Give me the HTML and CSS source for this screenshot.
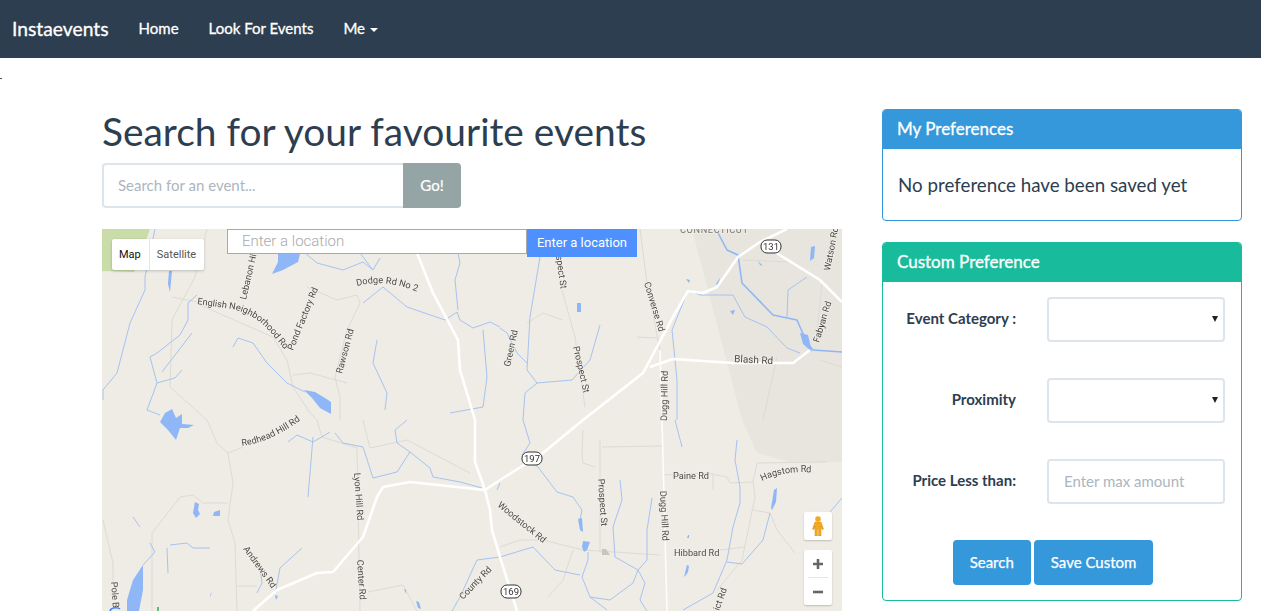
FILE: index.html
```html
<!DOCTYPE html>
<html lang="en">
<head>
    <meta charset="UTF-8">
    <title>Instaevents</title>
    <link rel="stylesheet" href="styles.css">
</head>
<body>
    <nav class="navbar">
        <a class="brand" href="#">Instaevents</a>
        <a class="nav-link" href="#">Home</a>
        <a class="nav-link" href="#">Look For Events</a>
        <a class="nav-link" href="#">Me <span class="caret"></span></a>
    </nav>
    <span class="stray"></span>

    <div class="page">
        <main class="search-col">
            <h1>Search for your favourite events</h1>
            <div class="input-group">
                <input class="search-input" type="text" placeholder="Search for an event...">
                <button class="go-btn">Go!</button>
            </div>

            <div class="map">
                <svg class="map-art" viewBox="102 229 740 382" width="740" height="382">
                    <defs>
                        <path id="english-rd" d="M197,304 L232,309 C250,313 262,322 272,334 L290,356"/>
                        <path id="dodge-rd" d="M357,286 C375,281 395,282 420,293"/>
                        <path id="hagstom-rd" d="M762,481 C778,473 795,471 820,473"/>
                        <path id="redhead-rd" d="M242,446 C262,443 280,436 306,416"/>
                    </defs>

                    <!-- land -->
                    <polygon class="shade" points="692,229 742,420 757,453 790,462 842,462 842,229"/>
                    <polygon class="park" points="102,229 150,229 139,262 134,272 102,271"/>

                    <!-- minor roads -->
                    <g class="minor">
                        <path d="M207,229 L195,277 L172,320 L170,387 L207,420 L217,443 L228,453 L233,483 L228,520 L235,543 L237,611"/>
                        <path d="M172,297 L197,302 M200,305 L273,337 L287,360 L293,387 L310,413 L317,420 L322,437 L357,448 L360,611"/>
                        <path d="M307,287 L337,300 L357,295 L360,303 L347,330 L335,377 L340,397 L340,420"/>
                        <path d="M293,375 L310,373 L347,383"/>
                        <path d="M228,453 L243,447"/>
                        <path d="M180,497 L152,533 L152,611 M180,497 L193,495 L203,503 L228,503"/>
                        <path d="M363,420 L370,448 L407,440 L470,473"/>
                        <path d="M368,592 L403,585 L417,611"/>
                        <path d="M103,520 L113,563 L113,583"/>
                        <path d="M237,586 L257,586"/>
                        <path d="M583,430 L582,453 L583,463 L595,467 M600,440 L600,553 M602,447 L662,446"/>
                        <path d="M500,547 L520,540 L543,540 L583,550 L660,555"/>
                        <path d="M573,550 L563,580 L548,597"/>
                        <path d="M663,475 L707,473 L727,477 L730,483 L753,482 L757,463 L827,462"/>
                        <path d="M755,497 L742,560 L717,590 M753,482 L755,497"/>
                        <path d="M753,510 L770,513 L777,530 L795,553"/>
                        <path d="M713,475 L713,490"/>
                        <path d="M720,550 L745,547"/>
                        <path d="M640,229 L647,283 L660,350 M637,337 L657,338"/>
                        <path d="M560,283 L575,337 L585,407"/>
                        <path d="M527,323 L543,313 L563,320"/>
                        <path d="M777,357 L763,420 M820,360 L842,367"/>
                        <path d="M822,283 L817,333"/>
                        <path d="M743,260 L790,262"/>
                        <path d="M500,250 L520,240"/>
                    </g>

                    <!-- rivers -->
                    <g class="river">
                        <path d="M155,229 L145,277 L145,290 L130,323 L117,373 L103,390 L103,400"/>
                        <path d="M197,295 L188,303 L188,320 L180,335 L157,353 L150,357 L157,383 L147,410 L160,415"/>
                        <path d="M182,370 L175,378 L157,383"/>
                        <path d="M192,333 L162,372"/>
                        <path d="M233,347 L238,338 L253,343 L267,363 L287,383 L305,392"/>
                        <path d="M305,253 L317,263 L343,270 L363,262 L373,270 L380,258 M360,253 L373,270"/>
                        <path d="M363,303 L383,287 L407,307 L445,320 L457,312 L460,320 L473,328 L490,322 L500,327"/>
                        <path d="M458,253 L460,263 L455,280 L458,310"/>
                        <path d="M483,330 L487,377 L483,407 L450,413"/>
                        <path d="M377,340 L373,363 L387,393 L385,410"/>
                        <path d="M288,442 L297,435 L313,442 L330,432 M313,437 L308,497"/>
                        <path d="M335,433 L343,443 L363,447 L373,478 L397,472 L410,452 L397,443 L395,430 L407,420"/>
                        <path d="M410,452 L430,468 L433,477 L460,482 L482,488"/>
                        <path d="M500,483 L497,490"/>
                        <path d="M133,517 L140,527"/>
                        <path d="M150,543 L155,552 L143,565"/>
                        <path d="M170,545 L187,543 L193,548 L210,548"/>
                        <path d="M167,548 L168,573"/>
                        <path d="M302,548 L280,568 L276,590"/>
                        <path d="M260,567 L262,583 L257,593"/>
                        <path d="M500,557 L477,560 L460,597 L452,611"/>
                        <path d="M523,420 L530,443 L522,455 L538,467 L557,492 L573,497 L582,510 L580,520"/>
                        <path d="M588,552 L588,560 L582,577 L590,597 L607,610"/>
                        <path d="M500,557 L533,547 L555,570 L580,575"/>
                        <path d="M620,480 L622,500 L613,527 L615,557 L638,570 L645,583 L640,600 L647,611"/>
                        <path d="M652,498 L647,530 L647,560 L638,570 L633,583 L610,600 L590,597"/>
                        <path d="M737,440 L735,460 L740,487 L740,503 L733,527 L727,560 L713,593 L683,610"/>
                        <path d="M727,562 L742,564 L763,540 L770,513"/>
                        <path d="M675,420 L682,447"/>
                        <path d="M842,498 L830,512"/>
                        <path d="M540,257 L530,317 L527,370 L537,383 L572,380 L590,360 L600,325"/>
                        <path d="M500,328 L507,333 L517,353 L527,363"/>
                        <path d="M537,383 L525,393 L523,420"/>
                        <path d="M690,290 L700,295 L733,295 L745,317 L767,327 L787,348 L800,353"/>
                        <path d="M687,293 L672,330 L677,380 L677,420"/>
                        <path d="M787,317 L788,290 L807,277"/>
                        <path class="river-wide" d="M718,233 L727,250 L738,255 L742,283 L773,315 L797,320 L807,343 L813,350"/>
                        <path class="river-wide" d="M813,350 L842,352"/>
                    </g>

                    <!-- water -->
                    <g class="water">
                        <path d="M278,253 L292,253 L301,250 L298,262 L283,270 L272,274 L278,262Z"/>
                        <path d="M304,390 L315,392 L325,398 L331,402 L331,414 L320,408 L312,398Z"/>
                        <path d="M165,413 L172,409 L176,418 L182,414 L182,424 L194,425 L188,428 L180,428 L176,440 L168,430 L160,422Z"/>
                        <path d="M169,271 L172,271 L170,292 L168,284Z"/>
                        <path d="M143,565 L133,580 L127,600 L127,611 L139,611 L143,590Z"/>
                        <path d="M195,502 L199,504 L198,510 L200,514 L196,518 L193,513Z"/>
                        <path d="M214,512 L220,510 L220,516 L213,516Z"/>
                        <path d="M577,303 L581,303 L581,312 L577,312Z"/>
                        <path d="M730,311 L735,310 L733,315Z"/>
                        <path d="M686,279 L690,280 L689,283Z"/>
                        <path d="M716,284 L720,278 L718,286Z"/>
                        <path d="M811,247 L815,246 L814,258 L810,261Z"/>
                        <path d="M800,333 L808,335 L812,352 L803,344Z"/>
                        <path d="M758,261 L763,266 L760,265Z"/>
                        <path d="M771,508 L774,490 L777,488 L776,502 L772,510Z"/>
                        <path d="M578,519 L582,518 L583,532 L580,530Z"/>
                        <path d="M583,541 L590,542 L587,550 L584,552 L582,547Z"/>
                        <path d="M687,565 L689,566 L688,572 L686,575 L684,577Z"/>
                        <path d="M688,535 L689,535 L689,538 L687,538Z"/>
                        <path d="M210,595 L212,592 L210,597Z"/>
                        <path d="M275,595 L278,596 L276,600Z"/>
                        <path d="M416,601 L419,602 L421,609 L418,608Z"/>
                        <path d="M404,589 L406,590 L406,594Z"/>
                    </g>

                    <!-- main roads -->
                    <g class="road">
                        <path d="M417,253 L433,293 L458,340 L460,370 L475,420 L475,462 L485,490 L490,510 L492,530 L500,557 L517,611"/>
                        <path d="M787,229 L760,242 L738,257 L717,287 L703,293 L688,291 L673,317 L643,373 L583,420 L543,453 L500,480 L485,490"/>
                        <path d="M770,249 L820,280 L842,302"/>
                        <path d="M650,367 L673,359 L733,363 L793,363 L810,350"/>
                        <path d="M485,490 L410,482 L383,487 L377,497 L363,537 L333,572 L317,573 L277,590 L253,611"/>
                        <path class="road-thin" d="M660,350 L662,420 L667,611"/>
                    </g>

                    <!-- road names -->
                    <g class="labels">
                        <text transform="translate(246,300) rotate(-77)">Lebanon Hill</text>
                        <text><textPath href="#english-rd">English Neighborhood Rd</textPath></text>
                        <text transform="translate(293,351) rotate(-68)">Pond Factory Rd</text>
                        <text transform="translate(342,374) rotate(-75)">Rawson Rd</text>
                        <text><textPath href="#dodge-rd">Dodge Rd No 2</textPath></text>
                        <text transform="translate(510,367) rotate(-78)">Green Rd</text>
                        <text transform="translate(556,256) rotate(82)">spect St</text>
                        <text transform="translate(573,347) rotate(77)">Prospect St</text>
                        <text transform="translate(644,283) rotate(73)">Converse Rd</text>
                        <text class="label-big" transform="translate(734,362) rotate(3)">Blash Rd</text>
                        <text transform="translate(667,421) rotate(-89)">Dugg Hill Rd</text>
                        <text transform="translate(819,343) rotate(-73)">Fabyan Rd</text>
                        <text transform="translate(830,271) rotate(-79)">Watson Rd</text>
                        <text class="label-caps" x="680" y="233">CONNECTICUT</text>
                        <text><textPath href="#redhead-rd">Redhead Hill Rd</textPath></text>
                        <text transform="translate(354,473) rotate(86)">Lyon Hill Rd</text>
                        <text transform="translate(357,560) rotate(86)">Center Rd</text>
                        <text transform="translate(243,549) rotate(54)">Andrews Rd</text>
                        <text transform="translate(463,600) rotate(-46)">County Rd</text>
                        <text transform="translate(497,506) rotate(39)">Woodstock Rd</text>
                        <text transform="translate(598,479) rotate(86)">Prospect St</text>
                        <text x="673" y="479">Paine Rd</text>
                        <text><textPath href="#hagstom-rd">Hagstom Rd</textPath></text>
                        <text transform="translate(660,491) rotate(87)">Dugg Hill Rd</text>
                        <text x="674" y="556">Hibbard Rd</text>
                        <text transform="translate(719,611) rotate(-70)">ict Rd</text>
                        <text transform="translate(111,582) rotate(86)">Pole B</text>
                    </g>

                    <polygon class="building" points="602,549 606,549 610,555 602,555"/>

                    <!-- shields -->
                    <g class="shield">
                        <rect x="761" y="240" width="20" height="13" rx="6"/>
                        <text x="771" y="250">131</text>
                        <rect x="522" y="452" width="20" height="13" rx="6"/>
                        <text x="532" y="462">197</text>
                        <rect x="501" y="585" width="20" height="13" rx="6"/>
                        <text x="511" y="595">169</text>
                    </g>

                    <!-- bits of the logo at the bottom -->
                    <path class="logo-blue" d="M110,611 C111,607 118,607 120,609"/>
                    <path class="logo-green" d="M158,607 L158,611"/>
                </svg>

                <div class="map-type">
                    <span class="map-type-on">Map</span>
                    <span class="map-type-off">Satellite</span>
                </div>
                <div class="location">
                    <input class="location-input" type="text" placeholder="Enter a location">
                    <button class="location-btn">Enter a location</button>
                </div>
                <div class="pegman">
                    <svg viewBox="0 0 12 20" width="12" height="20">
                        <circle cx="6" cy="3" r="2.8" fill="#f2a91e"/>
                        <path d="M3 6 H9 L11.5 13 L10 13.5 L9 10 V20 H6.6 V13 H5.4 V20 H3 V10 L2 13.5 L0.5 13Z" fill="#f2a91e" stroke="#d98c12" stroke-width="0.5"/>
                    </svg>
                </div>
                <div class="zoom">
                    <button class="zoom-btn">
                        <svg viewBox="0 0 12 12" width="12" height="12"><path d="M4.7 1 H7.3 V4.7 H11 V7.3 H7.3 V11 H4.7 V7.3 H1 V4.7 H4.7Z" fill="#666"/></svg>
                    </button>
                    <span class="zoom-sep"></span>
                    <button class="zoom-btn">
                        <svg viewBox="0 0 12 12" width="12" height="12"><rect x="1" y="4.7" width="10" height="2.6" fill="#666"/></svg>
                    </button>
                </div>
            </div>
        </main>

        <aside class="side-col">
            <section class="panel panel-blue">
                <h3 class="panel-title">My Preferences</h3>
                <div class="panel-body">
                    <p class="empty-note">No preference have been saved yet</p>
                </div>
            </section>

            <section class="panel panel-green">
                <h3 class="panel-title">Custom Preference</h3>
                <form class="pref-form">
                    <div class="form-row">
                        <label>Event Category :</label>
                        <div class="select-wrap"><select class="field"></select></div>
                    </div>
                    <div class="form-row">
                        <label>Proximity</label>
                        <div class="select-wrap"><select class="field"></select></div>
                    </div>
                    <div class="form-row">
                        <label>Price Less than:</label>
                        <input class="field" type="text" placeholder="Enter max amount">
                    </div>
                    <div class="form-actions">
                        <button class="btn" type="button">Search</button>
                        <button class="btn" type="button">Save Custom</button>
                    </div>
                </form>
            </section>
        </aside>
    </div>
</body>
</html>
```

FILE: styles.css
```css
* {
    box-sizing: border-box;
}

html, body {
    margin: 0;
    height: 611px;
    overflow: hidden;
}

body {
    position: relative;
    font-family: Lato, "Liberation Sans", sans-serif;
    font-size: 15px;
    color: #2c3e50;
    background-color: #fff;
}

/* Top bar */
.navbar {
    display: flex;
    align-items: center;
    height: 58px;
    padding: 0 0 2px 12px;
    background-color: #2c3e50;
}

.navbar a {
    color: #fff;
    text-decoration: none;
    -webkit-text-stroke: 0.3px #fff;
}

.brand {
    font-size: 19.3px;
    margin-right: 30px;
}

.nav-link {
    font-size: 15px;
    margin-right: 30px;
}

.caret {
    display: inline-block;
    width: 0;
    height: 0;
    margin-left: 1px;
    vertical-align: middle;
    border-top: 4px solid #fff;
    border-left: 4px solid transparent;
    border-right: 4px solid transparent;
}

/* the stray dot under the bar */
.stray {
    position: absolute;
    top: 78px;
    left: 0;
    width: 2px;
    height: 1px;
    background-color: #555;
}

/* Columns */
.page {
    display: flex;
    gap: 40px;
    padding: 51px 19px 0 102px;
}

.search-col {
    width: 740px;
    flex: none;
}

.side-col {
    width: 360px;
    flex: none;
}

h1 {
    font-size: 38.9px;
    font-weight: 400;
    line-height: 43px;
    margin: 1px 0 10px;
}

.input-group {
    display: flex;
    width: 359px;
    height: 45px;
    margin-bottom: 21px;
}

.search-input {
    flex: 1;
    min-width: 0;
    padding: 0 14px 2px;
    font: inherit;
    color: #2c3e50;
    border: 2px solid #dce4ec;
    border-right: 0;
    border-radius: 4px 0 0 4px;
    outline: none;
}

.search-input::placeholder,
.field::placeholder {
    color: #acb6c0;
    opacity: 1;
}

.go-btn {
    width: 58px;
    padding: 0 0 2px;
    font: inherit;
    color: #fff;
    background-color: #95a5a6;
    border: 0;
    border-radius: 0 4px 4px 0;
    -webkit-text-stroke: 0.2px #fff;
}

/* Map */
.map {
    position: relative;
    width: 740px;
    height: 382px;
    overflow: hidden;
    background-color: #eeece5;
    font-family: Roboto, Arial, sans-serif;
}

.map-art {
    display: block;
    filter: blur(0.35px);
}

.shade { fill: #e8e5de; }
.park { fill: #c9dcaa; }
.building { fill: #c9c5bc; }

.minor path {
    fill: none;
    stroke: #dbd8d0;
    stroke-width: 0.9;
    stroke-linejoin: round;
}

.river path {
    fill: none;
    stroke: #9dbdf3;
    stroke-width: 0.9;
    stroke-linejoin: round;
}

.river .river-wide {
    stroke: #8fb6f7;
    stroke-width: 1.6;
}

.water path {
    fill: #8fb6f7;
}

.road path {
    fill: none;
    stroke: #fff;
    stroke-width: 2.6;
    stroke-linejoin: round;
}

.road .road-thin {
    stroke-width: 1.6;
    stroke: #fdfdfb;
}

.labels text {
    font-size: 9.2px;
    fill: #4a4a46;
    stroke: #f1efe9;
    stroke-width: 1.4;
    paint-order: stroke;
}

.labels .label-big {
    font-size: 10px;
}

.labels .label-caps {
    letter-spacing: 0.6px;
    fill: #77746c;
}

.shield rect {
    fill: #fff;
    stroke: #333;
    stroke-width: 1;
}

.shield text {
    font-size: 9.5px;
    fill: #333;
    text-anchor: middle;
}

.logo-blue {
    fill: none;
    stroke: #4285f4;
    stroke-width: 1.5;
}

.logo-green {
    stroke: #34a853;
    stroke-width: 1.5;
}

.map-type {
    position: absolute;
    top: 10px;
    left: 10px;
    display: flex;
    height: 31px;
    align-items: stretch;
    font-size: 11px;
    line-height: 31px;
    background-color: #fff;
    border-radius: 2px;
    box-shadow: 0 1px 3px rgba(0, 0, 0, 0.2);
}

.map-type-on {
    padding: 0 8px 0 7px;
    color: #111;
    border-right: 1px solid #e6e6e6;
}

.map-type-off {
    padding: 0 8px 0 7px;
    color: #565656;
}

.location {
    position: absolute;
    top: 0;
    left: 125px;
    display: flex;
    align-items: flex-start;
}

.location-input {
    width: 300px;
    height: 25px;
    padding: 0 14px 2px;
    font-family: Roboto, Arial, sans-serif;
    font-size: 15px;
    font-weight: 300;
    background-color: #fff;
    border: 1px solid #a9a9a9;
    outline: none;
}

.location-input::placeholder {
    color: #a9a9a9;
    opacity: 1;
}

.location-btn {
    width: 110px;
    height: 28px;
    padding: 0 0 2px;
    font-family: Roboto, Arial, sans-serif;
    font-size: 13px;
    color: #fff;
    background-color: #4d90fe;
    border: 0;
}

.pegman {
    position: absolute;
    top: 283px;
    right: 10px;
    display: flex;
    width: 28px;
    height: 28px;
    align-items: center;
    justify-content: center;
    background-color: #fff;
    border-radius: 2px;
    box-shadow: 0 1px 2px rgba(0, 0, 0, 0.2);
}

.zoom {
    position: absolute;
    top: 321px;
    right: 10px;
    display: flex;
    flex-direction: column;
    align-items: center;
    width: 28px;
    height: 55px;
    background-color: #fff;
    border-radius: 2px;
    box-shadow: 0 1px 2px rgba(0, 0, 0, 0.2);
}

.zoom-btn {
    display: flex;
    width: 28px;
    height: 27px;
    padding: 0;
    align-items: center;
    justify-content: center;
    background: none;
    border: 0;
}

.zoom-sep {
    width: 20px;
    height: 1px;
    background-color: #e6e6e6;
}

/* Side panels */
.panel {
    background-color: #fff;
    border: 1px solid;
    border-radius: 4px;
    margin-bottom: 21px;
}

.panel-blue { border-color: #3498db; }
.panel-green { border-color: #18bc9c; }

.panel-title {
    height: 39px;
    margin: 0;
    padding: 0 15px 2px 14px;
    font-size: 17px;
    font-weight: 400;
    line-height: 37px;
    color: #fff;
    border-radius: 3px 3px 0 0;
    -webkit-text-stroke: 0.3px #fff;
}

.panel-blue .panel-title { background-color: #3498db; }
.panel-green .panel-title { background-color: #18bc9c; }

.panel-body {
    padding: 15px;
    height: 71px;
}

.empty-note {
    margin: 0;
    font-size: 18.75px;
    line-height: 41px;
    color: #2c3e50;
}

.pref-form {
    padding: 15px 16px 15px 0;
}

.form-row {
    display: grid;
    grid-template-columns: 133px 178px;
    column-gap: 31px;
    align-items: center;
    margin-bottom: 36px;
}

.form-row label {
    padding-bottom: 4px;
    text-align: right;
    font-weight: 700;
}

.select-wrap {
    position: relative;
}

.select-wrap::after {
    content: "";
    position: absolute;
    top: 19px;
    right: 7px;
    border-top: 6px solid #222;
    border-left: 3px solid transparent;
    border-right: 3px solid transparent;
}

.field {
    display: block;
    width: 178px;
    height: 45px;
    padding: 0 15px 2px;
    font: inherit;
    background-color: #fff;
    border: 2px solid #dce4ec;
    border-radius: 4px;
    outline: none;
    appearance: none;
}

.form-actions {
    display: flex;
    justify-content: center;
    gap: 3px;
    padding-right: 2px;
}

.btn {
    height: 45px;
    padding: 0 17px 2px;
    font: inherit;
    color: #fff;
    background-color: #3498db;
    border: 0;
    border-radius: 4px;
    -webkit-text-stroke: 0.25px #fff;
}
```
